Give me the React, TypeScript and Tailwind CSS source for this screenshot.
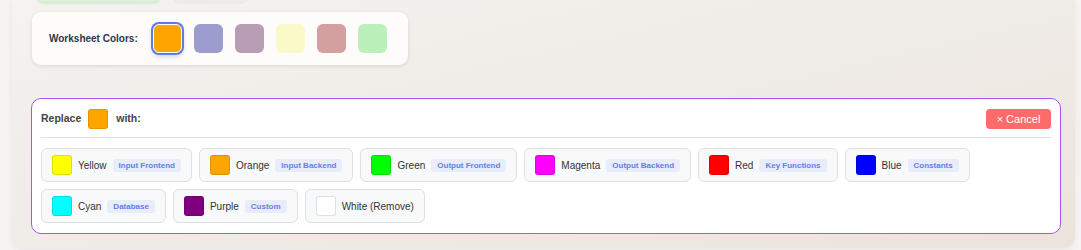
import React from "react";

const worksheetColors = ["#ffa500", "#9c9ccf", "#b89db5", "#fafac8", "#d4a09f", "#bcf0bb"];

type Option = { name: string; color: string; tag?: string };

const rowOne: Option[] = [
  { name: "Yellow", color: "#ffff00", tag: "Input Frontend" },
  { name: "Orange", color: "#ffa500", tag: "Input Backend" },
  { name: "Green", color: "#00ff00", tag: "Output Frontend" },
  { name: "Magenta", color: "#ff00ff", tag: "Output Backend" },
  { name: "Red", color: "#ff0000", tag: "Key Functions" },
  { name: "Blue", color: "#0000ff", tag: "Constants" },
];

const rowTwo: Option[] = [
  { name: "Cyan", color: "#00ffff", tag: "Database" },
  { name: "Purple", color: "#800080", tag: "Custom" },
  { name: "White (Remove)", color: "#ffffff" },
];

const ColorOption = ({ option }: { option: Option }) => (
  <button className="h-[34px] flex items-center gap-[5px] px-[10px] bg-[#f8f9fa] border border-[#e0e0e0] rounded-[6px]">
    <span
      className="w-[20px] h-[20px] rounded-[3px] border border-[#0000001f] shrink-0"
      style={{ backgroundColor: option.color }}
    />
    <span className="text-[10px] text-[#333] ml-[1px]">{option.name}</span>
    {option.tag && (
      <span className="text-[8px] leading-[11px] font-bold text-[#667eea] bg-[#e8ecfb] px-[6px] py-[1px] rounded-[3px] ml-[1px]">
        {option.tag}
      </span>
    )}
  </button>
);

export default function App() {
  return (
    <div
      className="h-[250px] overflow-hidden bg-[#f5f4f2] pl-3 pr-[6px]"
      style={{ fontFamily: '"Liberation Sans", Arial, sans-serif' }}
    >
      <div className="h-[248px] rounded-b-[12px] bg-gradient-to-br from-[#f4f3f0] to-[#ebe4dd] shadow-[0_2px_6px_rgba(0,0,0,0.06)] pl-[19px] pr-[14px] flex flex-col">
        {/* buttons above, mostly scrolled out of view */}
        <div className="flex gap-[13px] pl-[6px] -mt-[28px] h-[30px]">
          <div className="w-[123px] h-[30px] rounded-[6px] bg-[#d9f2d9] shadow-[0_1px_3px_rgba(120,200,120,0.35)]" />
          <div className="w-[75px] h-[30px] rounded-[6px] bg-[#eeece9] shadow-[0_1px_3px_rgba(0,0,0,0.05)]" />
        </div>

        {/* worksheet colours */}
        <div className="mt-[10px] w-[376px] h-[53px] ml-[1px] bg-[#fdfcfb] rounded-[9px] shadow-[0_1px_4px_rgba(0,0,0,0.1)] flex items-center pl-[17px]">
          <span className="text-[10px] font-bold text-[#2d3748] mr-[15px]">Worksheet Colors:</span>
          <div className="flex gap-[12px]">
            {worksheetColors.map((c, i) => (
              <div
                key={c}
                className={
                  i === 0
                    ? "w-[29px] h-[29px] rounded-[6px] border border-white ring-2 ring-[#5b7be9] shadow-[0_3px_6px_rgba(0,0,0,0.18)]"
                    : "w-[29px] h-[29px] rounded-[6px]"
                }
                style={{ backgroundColor: c }}
              />
            ))}
          </div>
        </div>

        {/* replace panel */}
        <div className="mt-[33px] h-[136px] bg-white border border-[#a855f7] rounded-[10px] px-[9px] pt-[10px]">
          <div className="flex items-center h-[20px] mb-[8px]">
            <span className="text-[10.5px] font-bold text-[#444]">Replace</span>
            <span className="w-[20px] h-[20px] rounded-[3px] bg-[#ffa500] border border-[#0000001a] ml-[7px] mr-[8px]" />
            <span className="text-[10.5px] font-bold text-[#444]">with:</span>
            <button className="ml-auto h-[20px] w-[65px] rounded-[4px] bg-[#ff6b6b] text-white text-[11px] flex items-center justify-center">
              × Cancel
            </button>
          </div>
          <div className="border-t border-[#e0e0e0]" />
          <div className="mt-[10px] flex flex-col gap-[7px]">
            <div className="flex gap-[7px]">
              {rowOne.map((o) => (
                <ColorOption key={o.name} option={o} />
              ))}
            </div>
            <div className="flex gap-[7px]">
              {rowTwo.map((o) => (
                <ColorOption key={o.name} option={o} />
              ))}
            </div>
          </div>
        </div>
      </div>
    </div>
  );
}
